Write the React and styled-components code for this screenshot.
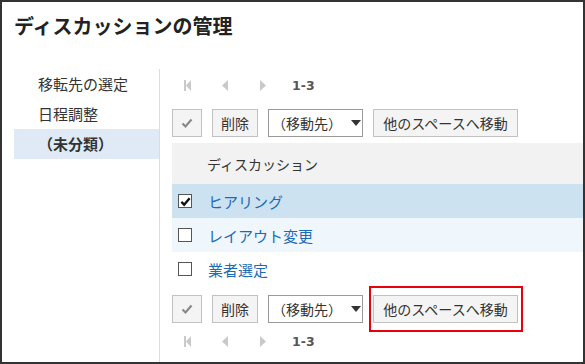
import React from "react";
import styled, { createGlobalStyle } from "styled-components";

const Global = createGlobalStyle`
  html, body { margin: 0; padding: 0; background: #fff; }
  * { box-sizing: border-box; }
  body { font-family: "Noto Sans CJK JP", "Noto Sans", sans-serif; color: #333; }
`;

const Frame = styled.div`
  width: 585px;
  height: 364px;
  border: 2px solid #333;
  display: flex;
  flex-direction: column;
  overflow: hidden;
`;

const Title = styled.h1`
  margin: 0;
  padding: 9px 0 0 12px;
  height: 67px;
  font-size: 20px;
  font-weight: bold;
  line-height: 30px;
  color: #222;
`;

const Body = styled.div`
  flex: 1;
  display: flex;
`;

const Sidebar = styled.nav`
  width: 158px;
  padding-left: 12px;
  border-right: 1px solid #dcdcdc;
  display: flex;
  flex-direction: column;
`;

const SideItem = styled.div`
  height: 30px;
  line-height: 30px;
  padding-left: 24px;
  font-size: 15px;
  color: #333;
  font-weight: ${(p) => (p.$active ? "bold" : "normal")};
  background: ${(p) => (p.$active ? "#dfeaf6" : "transparent")};
`;

const Main = styled.main`
  flex: 1;
  padding-left: 12px;
  display: flex;
  flex-direction: column;
`;

const Pager = styled.div`
  height: ${(p) => p.$h}px;
  display: flex;
  align-items: center;
  padding-left: 12px;
`;

const PagerIcon = styled.span`
  width: 38px;
  display: inline-flex;
  align-items: center;
`;

const PageCount = styled.span`
  font-family: "DejaVu Sans", "Liberation Sans", sans-serif;
  font-weight: bold;
  font-size: 12.5px;
  color: #555;
  margin-left: -6px;
`;

const Toolbar = styled.div`
  display: flex;
  gap: 10px;
  height: 28px;
  margin-top: ${(p) => p.$mt}px;
`;

const Btn = styled.button`
  height: 28px;
  width: ${(p) => p.$w}px;
  padding: 0;
  border: 1px solid #c2c2c2;
  background: #f4f4f4;
  color: #333;
  font-family: "Noto Sans CJK JP", sans-serif;
  font-size: 14px;
  display: inline-flex;
  align-items: center;
  justify-content: center;
  cursor: pointer;
`;

const Select = styled.div`
  height: 28px;
  width: 95px;
  border: 1px solid #9a9a9a;
  background: #fff;
  font-size: 14px;
  display: flex;
  align-items: center;
  padding-left: 3px;
  gap: 9px;
  color: #333;
`;

const Highlight = styled.span`
  position: relative;
  display: inline-flex;
  &::after {
    content: "";
    position: absolute;
    top: -9px;
    bottom: -9px;
    left: -4px;
    right: -5px;
    border: 2px solid #e8000b;
    pointer-events: none;
  }
`;

const Table = styled.div`
  margin-top: 6px;
  display: flex;
  flex-direction: column;
`;

const Header = styled.div`
  height: 41px;
  background: #f2f2f2;
  display: flex;
  align-items: center;
  padding-left: 35px;
  font-size: 14px;
  color: #333;
`;

const Row = styled.div`
  height: 34px;
  display: flex;
  align-items: center;
  padding-left: 6px;
  background: ${(p) => p.$bg};
`;

const Box = styled.span`
  width: 14px;
  height: 14px;
  border: 1px solid #555;
  background: #fff;
  display: inline-flex;
  align-items: center;
  justify-content: center;
  margin-right: 16px;
`;

const Link = styled.a`
  color: #1b6cb5;
  font-size: 15px;
  text-decoration: none;
`;

const First = () => (
  <svg width="8" height="11" viewBox="0 0 8 11">
    <rect x="0" y="0" width="2" height="11" fill="#c9c9c9" />
    <path d="M7 0 L2 5.5 L7 11 Z" fill="#c9c9c9" />
  </svg>
);
const Prev = () => (
  <svg width="6" height="11" viewBox="0 0 6 11">
    <path d="M6 0 L0 5.5 L6 11 Z" fill="#c9c9c9" />
  </svg>
);
const Next = () => (
  <svg width="6" height="11" viewBox="0 0 6 11">
    <path d="M0 0 L6 5.5 L0 11 Z" fill="#c9c9c9" />
  </svg>
);

const CheckIcon = ({ color = "#888", size = 12, w = 2.2 }) => (
  <svg width={size} height={size} viewBox="0 0 12 12">
    <path d="M1.5 6.5 L4.5 9.5 L10.5 2.5" stroke={color} strokeWidth={w} fill="none" />
  </svg>
);

const Caret = () => (
  <svg width="10" height="6" viewBox="0 0 10 6">
    <path d="M0 0 H10 L5 6 Z" fill="#333" />
  </svg>
);

function PagerRow({ h }) {
  return (
    <Pager $h={h}>
      <PagerIcon><First /></PagerIcon>
      <PagerIcon><Prev /></PagerIcon>
      <PagerIcon><Next /></PagerIcon>
      <PageCount>1-3</PageCount>
    </Pager>
  );
}

function Actions({ mt, highlight }) {
  const move = <Btn $w={145}>他のスペースへ移動</Btn>;
  return (
    <Toolbar $mt={mt}>
      <Btn $w={30}><CheckIcon /></Btn>
      <Btn $w={46}>削除</Btn>
      <Select>（移動先）<Caret /></Select>
      {highlight ? <Highlight>{move}</Highlight> : move}
    </Toolbar>
  );
}

const rows = [
  { name: "ヒアリング", checked: true, bg: "#cde2f0" },
  { name: "レイアウト変更", checked: false, bg: "#eff7fd" },
  { name: "業者選定", checked: false, bg: "#fff" },
];

export default function App() {
  return (
    <>
      <Global />
      <Frame>
        <Title>ディスカッションの管理</Title>
        <Body>
          <Sidebar>
            <SideItem>移転先の選定</SideItem>
            <SideItem>日程調整</SideItem>
            <SideItem $active>（未分類）</SideItem>
          </Sidebar>
          <Main>
            <PagerRow h={32} />
            <Actions mt={8} />
            <Table>
              <Header>ディスカッション</Header>
              {rows.map((r) => (
                <Row key={r.name} $bg={r.bg}>
                  <Box>{r.checked && <CheckIcon color="#111" size={11} w={2.6} />}</Box>
                  <Link href="#">{r.name}</Link>
                </Row>
              ))}
            </Table>
            <Actions mt={9} highlight />
            <PagerRow h={36} />
          </Main>
        </Body>
      </Frame>
    </>
  );
}
